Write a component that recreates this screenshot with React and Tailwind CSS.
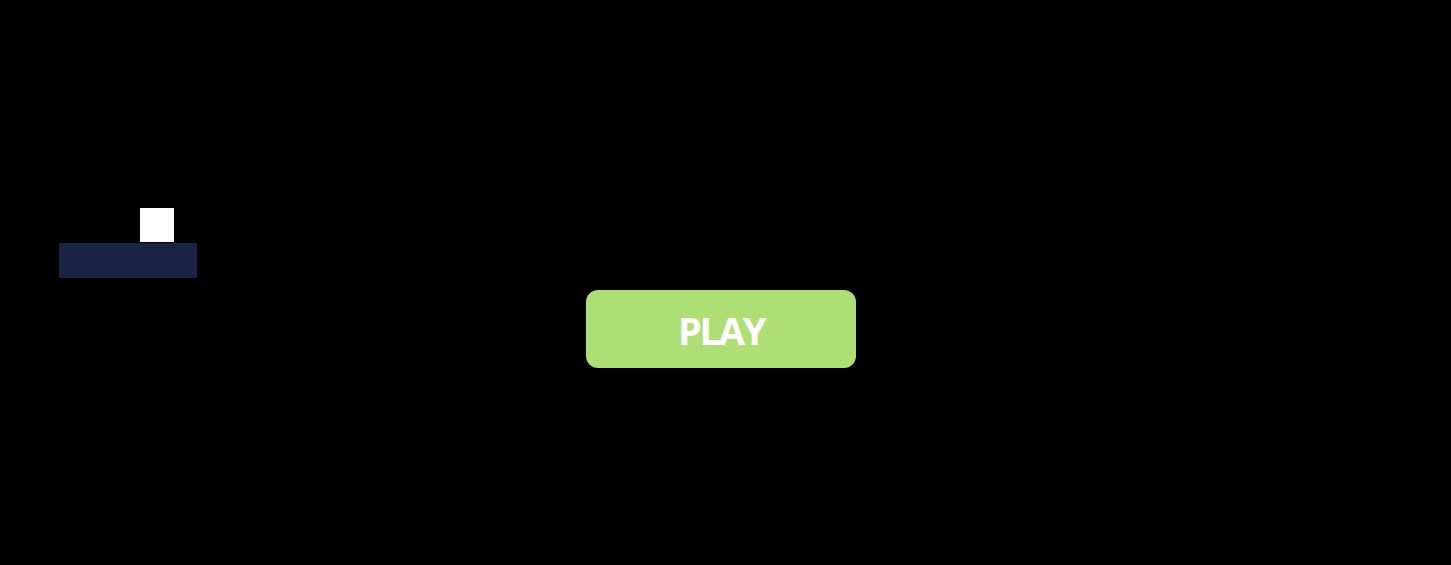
export default function App() {
  return (
    <div className="relative h-[565px] w-full overflow-hidden bg-black">
      {/* player + platform on the game canvas */}
      <div className="absolute left-[140px] top-[208px] h-[34px] w-[34px] bg-white" />
      <div className="absolute left-[59px] top-[243px] h-[35px] w-[138px] bg-[#1a2346]" />

      <button
        type="button"
        className="absolute left-[586px] top-[290px] flex h-[78px] w-[270px] items-center justify-center rounded-[12px] bg-[#addf75] pt-[2px] text-[38px] font-bold tracking-[-0.06em] text-white"
        style={{ fontFamily: "'Open Sans', sans-serif" }}
      >
        PLAY
      </button>
    </div>
  );
}
